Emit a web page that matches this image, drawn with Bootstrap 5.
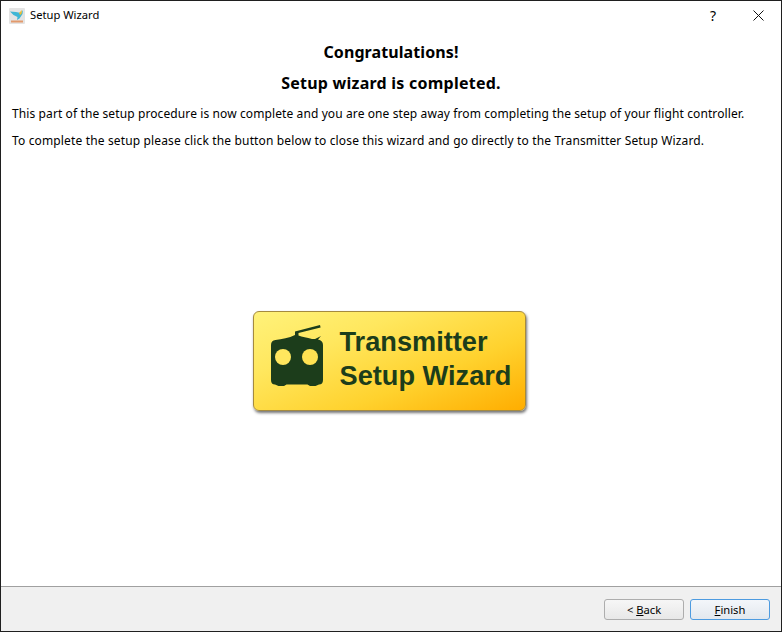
<!DOCTYPE html>
<html lang="en"><head><meta charset="utf-8"><title>Setup Wizard</title>
<link href="https://cdn.jsdelivr.net/npm/bootstrap@5.3.0/dist/css/bootstrap.min.css" rel="stylesheet">
<style>
html,body{height:100%;margin:0;background:#fff}
.wiz{height:632px;width:782px;border:1px solid #1f1f1f;display:flex;flex-direction:column;font-family:"Noto Sans","Liberation Sans",sans-serif;color:#000;overflow:hidden}
.wiz-title{height:30px;padding-left:8px;padding-bottom:1px;font-size:11.2px;gap:5px;flex:none}
.wiz-ctl{font-size:14px;text-align:center}
.wiz-q{width:36px}
.wiz-x{width:45px}
.wiz-body{flex:1;min-height:0}
.wiz-h{font-family:"Noto Sans",sans-serif;font-weight:700;font-size:16px;line-height:22px;text-align:center;margin:0}
.wiz-h1{margin-top:10px;letter-spacing:.1px}.wiz-h2{margin-top:9px;letter-spacing:.24px}
.wiz-p{font-size:12px;line-height:16px;margin:0;padding-left:11px;white-space:nowrap}
.wiz-p1{margin-top:12px;letter-spacing:.105px}.wiz-p2{margin-top:11px;letter-spacing:.147px}
.wiz-stage{flex:1;padding:0 4px 14px 0}
.tx-btn{width:273px;height:100px;border-radius:6px;border:1.5px solid #a58a3e;background:linear-gradient(158deg,#fff27a 0%,#ffe75e 30%,#ffd22e 65%,#ffad00 100%);box-shadow:1px 2px 3px rgba(0,0,0,.55);padding-left:17px;gap:17px;color:#1c3d1b;font-family:"Liberation Sans",sans-serif;font-weight:700;font-size:27.2px;line-height:34px}
.tx-icon{margin-bottom:12px}
.tx-label{margin-top:-4px}
.wiz-foot{height:45px;flex:none;background:#f0f0f0;border-top:1px solid #a0a0a0;padding:12px 11px 0 0;gap:6px;justify-content:flex-end}
.qt-btn{width:80px;height:21px;border:1px solid #adadad;border-radius:3px;background:linear-gradient(#f6f6f6,#e8e8e8);font-size:11.2px;line-height:19px;text-align:center;padding:0;color:#000;font-family:"Noto Sans",sans-serif}
.qt-def{border-color:#4d9be0;background:linear-gradient(#f3f6fa,#e3e8ee)}
</style></head><body>
<div class="wiz">
 <div class="wiz-title d-flex align-items-center">
  <svg width="16" height="16" viewBox="0 0 16 16"><rect width="16" height="16" rx="1" fill="#e4e4e4"/><path d="M1 3.500 7 4 12 5l2-3-.5 4-3 4.500-2.500 1.500.5-3L4.500 7z" fill="#3fb6d6"/><path d="M10 5l3-3-.5 4-1.500 1z" fill="#eebc2d"/><rect x="2" y="12.500" width="12" height="2" fill="#e39a6c"/></svg>
  <span class="flex-grow-1">Setup Wizard</span>
  <span class="wiz-ctl wiz-q">?</span>
  <span class="wiz-ctl wiz-x d-inline-flex justify-content-center"><svg width="11" height="11" viewBox="0 0 11 11"><path d="M.5.500l10 10M10.500.500l-10 10" stroke="#111" fill="none"/></svg></span>
 </div>
 <div class="wiz-body d-flex flex-column">
  <h1 class="wiz-h wiz-h1">Congratulations!</h1>
  <h2 class="wiz-h wiz-h2">Setup wizard is completed.</h2>
  <p class="wiz-p wiz-p1">This part of the setup procedure is now complete and you are one step away from completing the setup of your flight controller.</p>
  <p class="wiz-p wiz-p2">To complete the setup please click the button below to close this wizard and go directly to the Transmitter Setup Wizard.</p>
  <div class="wiz-stage d-flex align-items-center justify-content-center">
   <div class="tx-btn d-flex align-items-center">
    <svg class="tx-icon" width="52" height="62" viewBox="0 0 52 62"><path d="M24 11 V7.500 L49 1 L49.600 3.500 L27.500 9 V11.500 C31 13 36 13.500 41 15 L44 15 L50 12 L47 15.500 C50.500 16.500 52 18 52 21 V56 C52 59 50.500 60.500 48 60.500 L44.500 62 H39 L36.500 60.500 H15.500 L13 62 H7.500 L4 60.500 C1.500 60.500 0 59 0 56 V21 C0 18 1.500 16.500 4.500 16 C11 15 18 14 24 11Z" fill="#1c3d1b"/><circle cx="12" cy="33" r="8" fill="#ffe75e"/><circle cx="39" cy="33" r="8" fill="#ffe252"/></svg>
    <div class="tx-label">Transmitter<br>Setup Wizard</div>
   </div>
  </div>
 </div>
 <div class="wiz-foot d-flex">
  <button type="button" class="qt-btn">&lt; <u>B</u>ack</button>
  <button type="button" class="qt-btn qt-def"><u>F</u>inish</button>
 </div>
</div>
<script src="https://cdn.jsdelivr.net/npm/bootstrap@5.3.0/dist/js/bootstrap.bundle.min.js"></script>
</body></html>
